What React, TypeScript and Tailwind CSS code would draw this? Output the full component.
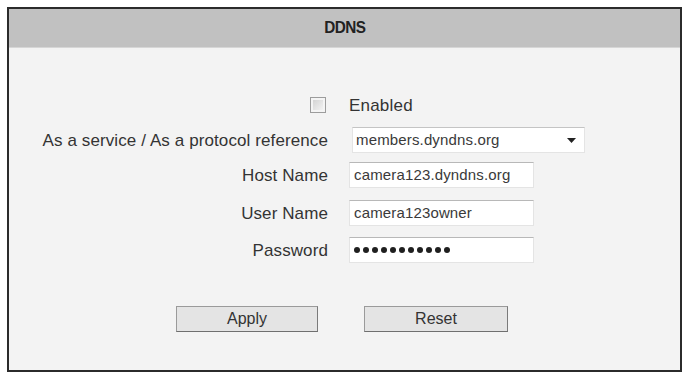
import React from "react";

const font = { fontFamily: '"Liberation Sans", Arial, sans-serif' };

function Label({ children }: { children: React.ReactNode }) {
  return (
    <div className="w-[319px] shrink-0 text-right text-[17px] leading-none text-[#333] tracking-[0.1px]">
      {children}
    </div>
  );
}

function Field({ children, w = "w-[185px]" }: { children: React.ReactNode; w?: string }) {
  return (
    <div
      className={`${w} h-[26px] ml-[21px] flex items-center bg-white border border-[#e4e4e4] border-t-[#b8b8b8] pl-[4px] text-[15px] text-[#3a3a3a] tracking-[0.15px]`}
    >
      {children}
    </div>
  );
}

export default function App() {
  const dots = Array.from({ length: 11 });
  return (
    <div className="w-[687px] h-[376px] bg-white pt-[7px] pl-[7px]" style={font}>
      <div className="w-[675px] h-[365px] border-2 border-[#2b2b2b] bg-[#f3f3f3] flex flex-col">
        <div className="h-[39px] bg-[#c1c1c1] flex items-center justify-center border-b border-[#d6d6d6]">
          <span className="text-[17px] font-bold text-[#222] tracking-[-0.6px] scale-x-90 inline-block">DDNS</span>
        </div>

        <div className="flex flex-col">
          {/* Enabled */}
          <div className="mt-[44px] h-[26px] flex items-center">
            <div className="w-[319px] shrink-0 flex justify-end pr-[2px]">
              <div className="w-[16px] h-[16px] border border-[#9c9c9c] bg-[#f4f4f4] flex items-center justify-center">
                <div className="w-[10px] h-[10px] bg-gradient-to-br from-[#d4d4d4] to-[#f2f2f2]" />
              </div>
            </div>
            <span className="ml-[21px] text-[17px] leading-none text-[#333] tracking-[0.2px]">Enabled</span>
          </div>

          {/* Service */}
          <div className="mt-[9px] h-[26px] flex items-center">
            <Label>As a service / As a protocol reference</Label>
            <div className="w-[233px] h-[26px] ml-[24px] flex items-center justify-between bg-white border border-[#e4e4e4] border-t-[#c4c4c4] pl-[3px] pr-[8px] text-[15px] text-[#3a3a3a] tracking-[0.15px]">
              <span>members.dyndns.org</span>
              <svg width="9" height="5" viewBox="0 0 9 5">
                <path d="M0 0 L9 0 L4.5 5 Z" fill="#222" />
              </svg>
            </div>
          </div>

          {/* Host Name */}
          <div className="mt-[9px] h-[26px] flex items-center">
            <Label>Host Name</Label>
            <Field>camera123.dyndns.org</Field>
          </div>

          {/* User Name */}
          <div className="mt-[12px] h-[26px] flex items-center">
            <Label>User Name</Label>
            <Field>camera123owner</Field>
          </div>

          {/* Password */}
          <div className="mt-[11px] h-[26px] flex items-center">
            <Label>Password</Label>
            <Field>
              <div className="flex gap-[3px]">
                {dots.map((_, i) => (
                  <span key={i} className="w-[6px] h-[6px] rounded-full bg-[#1f1f1f]" />
                ))}
              </div>
            </Field>
          </div>

          {/* Buttons */}
          <div className="mt-[43px] flex pl-[167px] gap-[46px]">
            <button className="w-[142px] h-[26px] bg-[#e4e4e4] border border-[#9a9a9a] border-b-[#6f6f6f] border-r-[#7a7a7a] text-[16px] text-[#333] leading-none">
              Apply
            </button>
            <button className="w-[144px] h-[26px] bg-[#e4e4e4] border border-[#9a9a9a] border-b-[#6f6f6f] border-r-[#7a7a7a] text-[16px] text-[#333] leading-none">
              Reset
            </button>
          </div>
        </div>
      </div>
    </div>
  );
}
